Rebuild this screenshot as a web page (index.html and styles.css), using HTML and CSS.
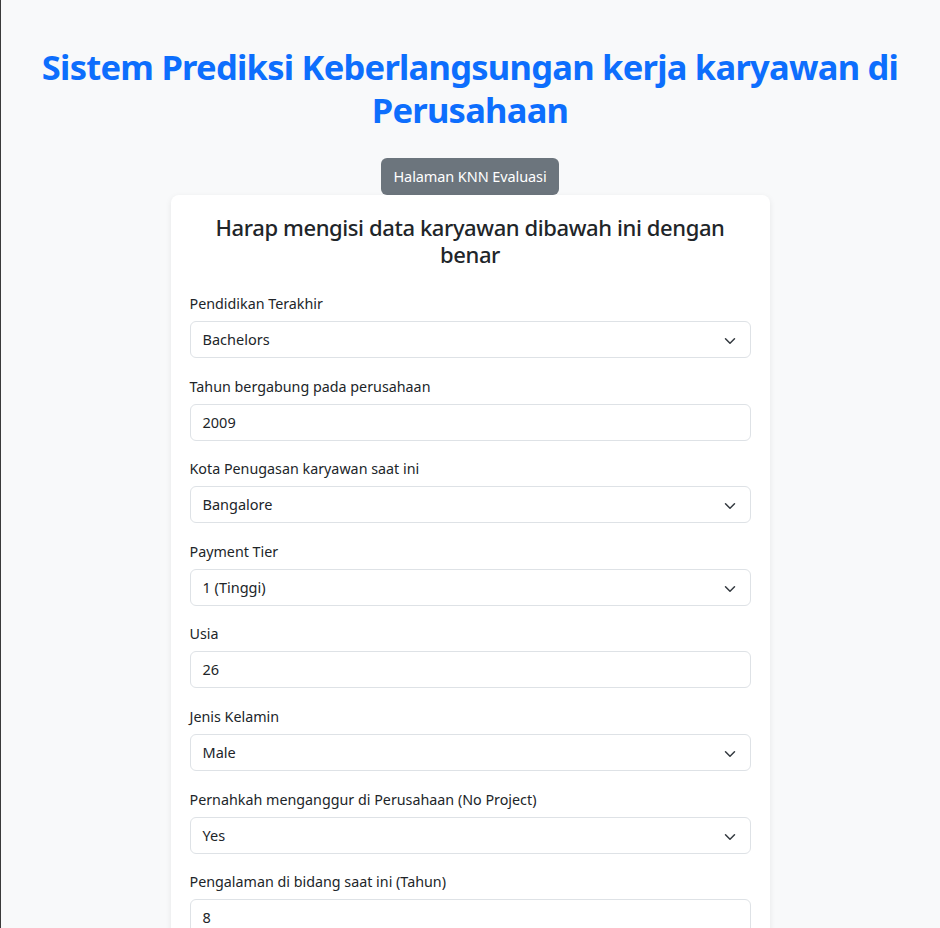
FILE: index.html
```html
<!DOCTYPE html>
<html lang="id">
<head>
<meta charset="utf-8">
<title>Sistem Prediksi</title>
<link rel="stylesheet" href="styles.css">
</head>
<body>
<div class="page">
  <h1 class="title">Sistem Prediksi Keberlangsungan kerja karyawan di Perusahaan</h1>
  <div class="btn-row"><a class="btn" href="#">Halaman KNN Evaluasi</a></div>
  <div class="card">
    <h4 class="card-title">Harap mengisi data karyawan dibawah ini dengan benar</h4>
    <div class="field">
      <label class="label">Pendidikan Terakhir</label>
      <div class="control select">Bachelors<svg class="chev" viewBox="0 0 16 16"><path d="M2 5l6 6 6-6" fill="none" stroke="#343a40" stroke-width="2" stroke-linecap="round" stroke-linejoin="round"/></svg></div>
    </div>
    <div class="field">
      <label class="label">Tahun bergabung pada perusahaan</label>
      <div class="control">2009</div>
    </div>
    <div class="field">
      <label class="label">Kota Penugasan karyawan saat ini</label>
      <div class="control select">Bangalore<svg class="chev" viewBox="0 0 16 16"><path d="M2 5l6 6 6-6" fill="none" stroke="#343a40" stroke-width="2" stroke-linecap="round" stroke-linejoin="round"/></svg></div>
    </div>
    <div class="field">
      <label class="label">Payment Tier</label>
      <div class="control select">1 (Tinggi)<svg class="chev" viewBox="0 0 16 16"><path d="M2 5l6 6 6-6" fill="none" stroke="#343a40" stroke-width="2" stroke-linecap="round" stroke-linejoin="round"/></svg></div>
    </div>
    <div class="field">
      <label class="label">Usia</label>
      <div class="control">26</div>
    </div>
    <div class="field">
      <label class="label">Jenis Kelamin</label>
      <div class="control select">Male<svg class="chev" viewBox="0 0 16 16"><path d="M2 5l6 6 6-6" fill="none" stroke="#343a40" stroke-width="2" stroke-linecap="round" stroke-linejoin="round"/></svg></div>
    </div>
    <div class="field">
      <label class="label">Pernahkah menganggur di Perusahaan (No Project)</label>
      <div class="control select">Yes<svg class="chev" viewBox="0 0 16 16"><path d="M2 5l6 6 6-6" fill="none" stroke="#343a40" stroke-width="2" stroke-linecap="round" stroke-linejoin="round"/></svg></div>
    </div>
    <div class="field">
      <label class="label">Pengalaman di bidang saat ini (Tahun)</label>
      <div class="control">8</div>
    </div>
  </div>
</div>
</body>
</html>
```
FILE: styles.css
```css
html, body {
  margin: 0;
  padding: 0;
}
body {
  background: #f8f9fa;
  font-family: "Noto Sans", "Open Sans", sans-serif;
  color: #212529;
  box-shadow: inset 1px 0 0 #3a3a3a;
  min-height: 928px;
  box-sizing: border-box;
}
.page {
  display: flex;
  flex-direction: column;
  align-items: center;
  padding-top: 45px;
}
.title {
  margin: 0;
  width: 920px;
  text-align: center;
  color: #0d6efd;
  font-size: 34.5px;
  letter-spacing: -0.75px;
  font-weight: 700;
  line-height: 43px;
}
.btn-row {
  margin-top: 27px;
}
.btn {
  display: inline-block;
  background: #6c757d;
  color: #fff;
  text-decoration: none;
  font-size: 14.5px;
  letter-spacing: -0.1px;
  line-height: 22px;
  padding: 7px 12px 8px;
  border-radius: 6px;
}
.card {
  width: 599px;
  box-sizing: border-box;
  background: #fff;
  border-radius: 8px;
  box-shadow: 0 2px 6px rgba(0, 0, 0, 0.08);
  padding: 19px 19px 20px;
}
.card-title {
  margin: 0 0 25px;
  text-align: center;
  font-size: 22px;
  letter-spacing: -0.4px;
  font-weight: 500;
  line-height: 27px;
}
.field {
  margin-bottom: 17.6px;
}
.label {
  display: block;
  font-size: 14.3px;
  line-height: 22px;
  margin-bottom: 6px;
}
.control {
  position: relative;
  height: 37px;
  box-sizing: border-box;
  border: 1px solid #dee2e6;
  border-radius: 6px;
  padding: 0 12px;
  font-size: 14.5px;
  line-height: 35px;
  background: #fff;
}
.chev {
  position: absolute;
  right: 14px;
  top: 13px;
  width: 12px;
  height: 12px;
}
```
